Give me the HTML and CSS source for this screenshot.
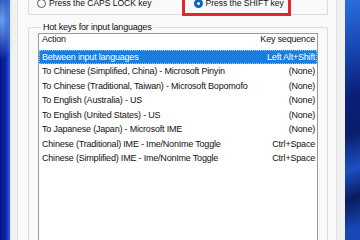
FILE: index.html
```html
<!DOCTYPE html>
<html lang="en">
<head>
    <meta charset="UTF-8">
    <title>Advanced Key Settings</title>
    <link rel="stylesheet" href="styles.css">
</head>
<body>
    <div class="desk">
        <div class="wall wall-left"></div>
        <div class="window">
            <div class="page">
                <div class="group switch">
                    <label class="opt"><span class="radio"></span>Press the CAPS LOCK key</label>
                    <label class="opt marked"><span class="radio on"></span>Press the SHIFT key</label>
                </div>

                <fieldset class="group hotkeys">
                    <legend>Hot keys for input languages</legend>
                    <div class="list">
                        <div class="row head"><span>Action</span><span>Key sequence</span></div>
                        <div class="row sel"><span>Between input languages</span><span>Left Alt+Shift</span></div>
                        <div class="row"><span>To Chinese (Simplified, China) - Microsoft Pinyin</span><span>(None)</span></div>
                        <div class="row"><span>To Chinese (Traditional, Taiwan) - Microsoft Bopomofo</span><span>(None)</span></div>
                        <div class="row"><span>To English (Australia) - US</span><span>(None)</span></div>
                        <div class="row"><span>To English (United States) - US</span><span>(None)</span></div>
                        <div class="row"><span>To Japanese (Japan) - Microsoft IME</span><span>(None)</span></div>
                        <div class="row"><span>Chinese (Traditional) IME - Ime/NonIme Toggle</span><span>Ctrl+Space</span></div>
                        <div class="row"><span>Chinese (Simplified) IME - Ime/NonIme Toggle</span><span>Ctrl+Space</span></div>
                    </div>
                </fieldset>
            </div>
        </div>
        <div class="wall wall-right"></div>
    </div>
</body>
</html>
```

FILE: styles.css
```css
body { margin: 0; height: 240px; overflow: hidden; font-family: "Liberation Sans", Arial, sans-serif; font-size: 9px; letter-spacing: -0.2px; color: #111; }
.desk { display: flex; height: 240px; }

/* wallpaper strips */
.wall { flex: none; height: 240px; }
.wall-left { width: 10px; background: radial-gradient(ellipse 14px 40px at 2px 20px, #6aa2ee 0, rgba(90,140,230,0) 100%), linear-gradient(to right, #08158a 0, #0b24a8 60%, #2f63d8 100%); }
.wall-right { width: 15px; background: linear-gradient(160deg, #2c6fe0 0, #1744b0 22%, #0b1f78 40%, #0a1d6a 55%, #1d4fc4 70%, #0a1a5c 82%, #1848b8 95%); }

/* dialog */
.window { width: 320px; flex: none; background: #f0f0f0; border-left: 1px solid #d6e4f7; padding: 0 8px 0 6px; }
.page { height: 240px; background: #f9f9f9; border-left: 1px solid #e3e3e3; border-right: 1px solid #e3e3e3; padding: 0 8px 0 10px; }

.group { border: 1px solid #dcdcdc; border-radius: 2px; }
.switch { height: 14px; border-top: none; display: flex; align-items: flex-start; }
.opt { display: flex; align-items: center; height: 12px; margin-top: -3px; padding: 0 5px 4px 8px; white-space: nowrap; font-size: 8.5px; letter-spacing: 0; }
.opt .radio { width: 7px; height: 7px; border: 1px solid #555; border-radius: 50%; background: #fff; margin-right: 3px; flex: none; }
.opt .radio.on { width: 3px; height: 3px; border: 3px solid #0a64c8; }
.marked { margin-left: 28px; padding: 0 4px 4px 9px; outline: 3px solid #e3262b; }

.hotkeys { margin: 7px 0 0; padding: 0 9px; min-width: 0; }
.hotkeys legend { padding: 0 2px; margin-left: 3px; line-height: 11px; }

.list { background: #fff; border: 1px solid #9a9a9a; height: 220px; }
.row { display: flex; justify-content: space-between; height: 14.45px; line-height: 14.45px; padding: 0 2px 0 3px; white-space: nowrap; }
.row.head { height: 16px; line-height: 11px; }
.row.sel { background: #1a7ee0; color: #fff; outline: 1px dotted rgba(255,255,255,0.55); outline-offset: -1px; }
```
